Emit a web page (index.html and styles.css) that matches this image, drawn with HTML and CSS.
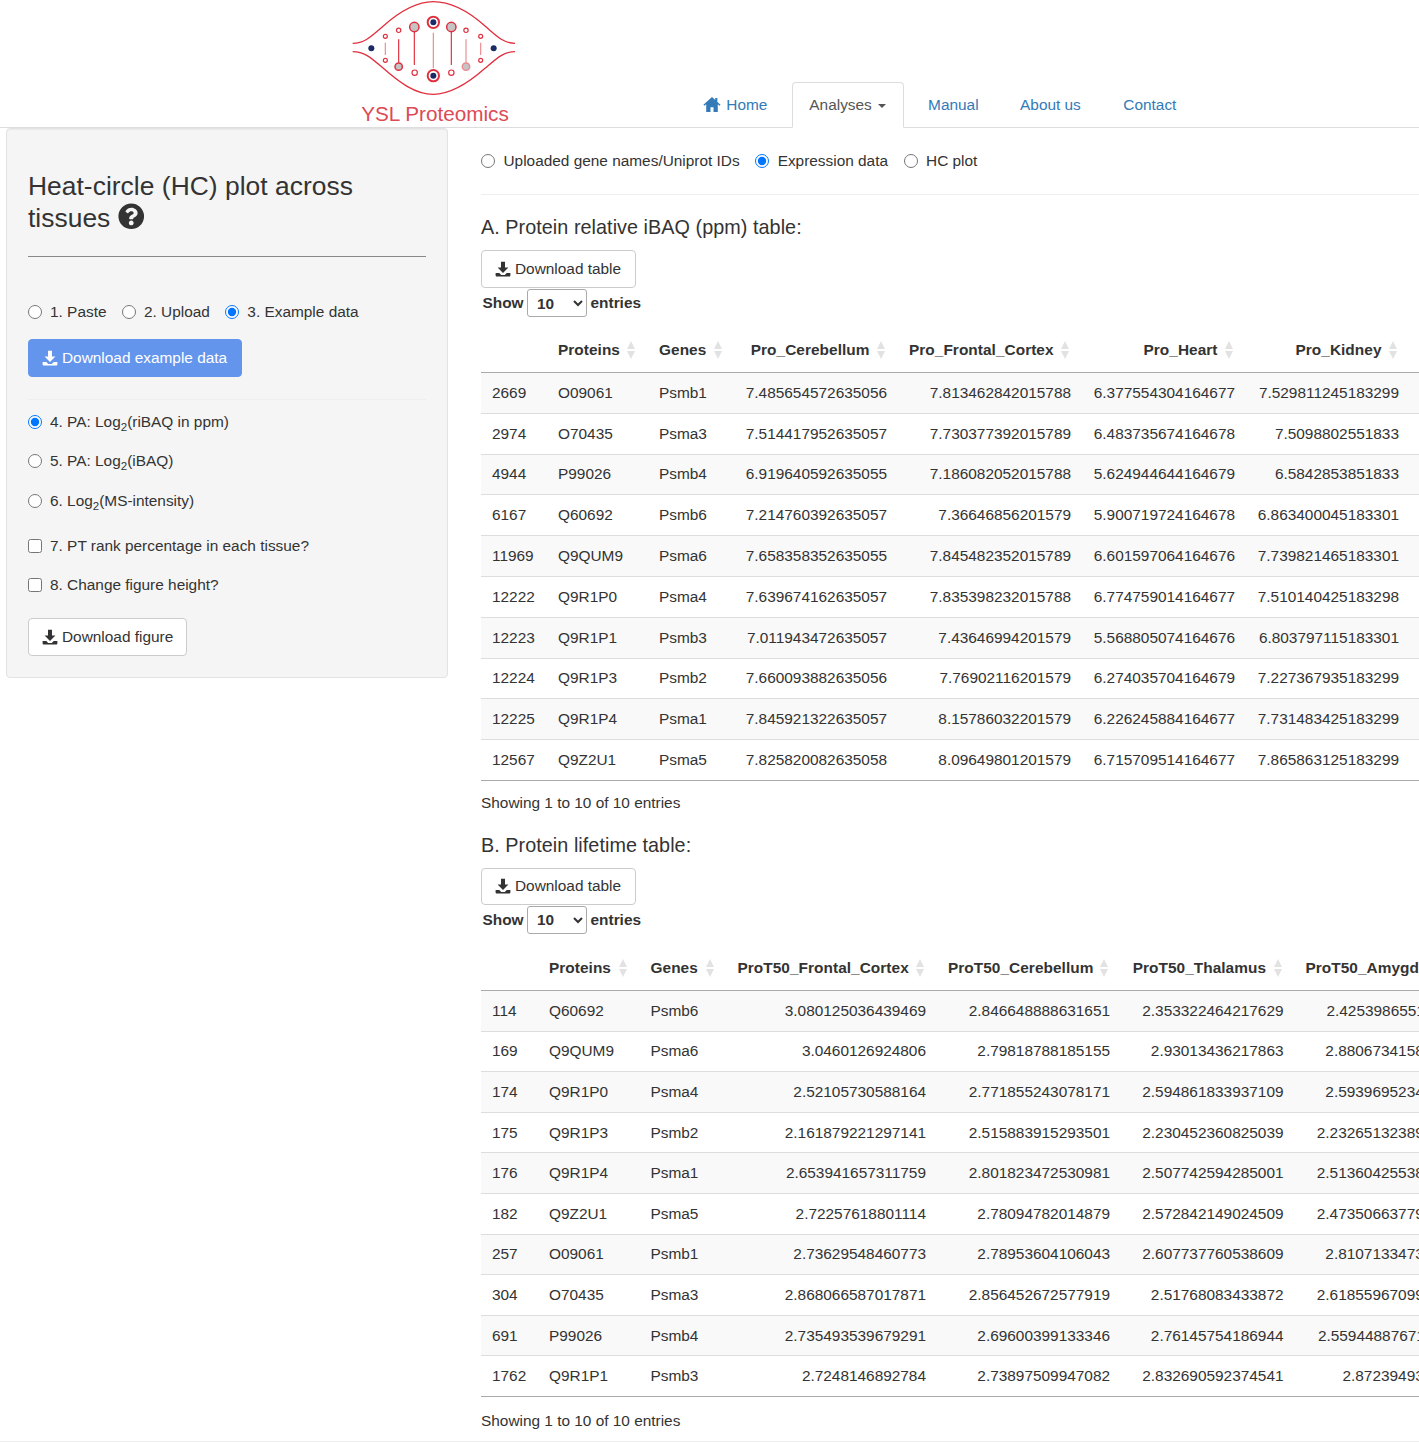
FILE: index.html
```html
<!DOCTYPE html>
<html lang="en">
<head>
<meta charset="utf-8">
<title>YSL Proteomics</title>
<link rel="stylesheet" href="styles.css">
</head>
<body>
<svg class="sprites" width="0" height="0" aria-hidden="true">
  <symbol id="dl" viewBox="0 0 16 16"><path d="M6 .8h4v5.700h3.400L8 11.900 2.600 6.500H6zM.6 12h3.700l1.900 1.900h3.600l1.900-1.900h3.700v2.200c0 .8-.5 1.300-1.300 1.300H1.900c-.8 0-1.300-.5-1.300-1.300z"/></symbol>
</svg>
<header class="navbar">
  <div class="brand">
    <svg class="logo" viewBox="0 0 570 330" aria-hidden="true">
      <g fill="none" stroke="#e0303f" stroke-width="4">
        <path d="M38 130C75 130 95 108 130 78C175 38 225 5 280 5C335 5 390 38 435 78C470 108 490 130 525 130"/>
        <path d="M38 155C75 155 95 175 130 205C175 245 225 283 280 283C335 283 390 245 435 205C470 175 490 155 525 155"/>
        <path d="M176 118V188M223 95V195M334 95V195" stroke-width="3.500"/>
        <path d="M136 128V165M280 98V205M378 118V188M422 128V165" stroke="#ea8c92" stroke-width="3.500"/>
        <g stroke-width="3.500">
          <circle cx="136" cy="109" r="6"/><circle cx="136" cy="181" r="6"/>
          <circle cx="176" cy="91" r="6.500"/><circle cx="224" cy="218" r="8"/>
          <circle cx="334" cy="218" r="8"/><circle cx="378" cy="91" r="6.500"/>
          <circle cx="422" cy="109" r="6"/><circle cx="422" cy="181" r="6"/>
        </g>
        <g fill="#c4c4c4" stroke-width="4.500">
          <circle cx="176" cy="200" r="11"/>
          <circle cx="223" cy="81" r="14"/><circle cx="334" cy="81" r="14"/>
          <circle cx="378" cy="200" r="11" stroke="#ea8c92"/>
        </g>
        <circle cx="280" cy="67" r="17" stroke-width="6"/>
        <circle cx="280" cy="227" r="17" stroke-width="6"/>
      </g>
      <g fill="#1c2a66">
        <circle cx="94" cy="145" r="9"/><circle cx="461" cy="145" r="9"/>
        <circle cx="280" cy="67" r="9"/><circle cx="280" cy="227" r="9"/>
      </g>
    </svg>
    <span class="brand-name">YSL Proteomics</span>
  </div>
  <nav class="tabs">
    <a class="tab"><svg class="home-icon" viewBox="0 0 16 14" aria-hidden="true"><path d="M8 0 0 7.200l.9 1L2.600 6.800V14h4V9.500h2.800V14h4V6.800l1.700 1.400.9-1L13 4.600V1h-2v1.800z"/></svg> Home</a>
    <a class="tab active">Analyses <span class="caret"></span></a>
    <a class="tab">Manual</a>
    <a class="tab tab-about">About us</a>
    <a class="tab tab-contact">Contact</a>
  </nav>
</header>

<div class="page">
  <aside class="well">
    <h3 class="well-title">Heat-circle (HC) plot across tissues <svg class="help" viewBox="0 0 512 512" aria-hidden="true"><path d="M504 256c0 136.997-111.043 248-248 248S8 392.997 8 256C8 119.083 119.043 8 256 8s248 111.083 248 248zM262.655 90c-54.497 0-89.255 22.957-116.549 63.758-3.536 5.286-2.353 12.415 2.715 16.258l34.699 26.310c5.205 3.947 12.621 3.008 16.665-2.122 17.864-22.658 30.113-35.797 57.303-35.797 20.429 0 45.698 13.148 45.698 32.958 0 14.976-12.363 22.667-32.534 33.976C247.128 238.528 216 254.941 216 296v4c0 6.627 5.373 12 12 12h56c6.627 0 12-5.373 12-12v-1.333c0-28.462 83.186-29.647 83.186-106.667 0-58.002-60.165-102-116.531-102zM256 338c-25.365 0-46 20.635-46 46 0 25.364 20.635 46 46 46s46-20.636 46-46c0-25.365-20.635-46-46-46z"/></svg></h3>
    <hr class="rule-dark">
    <div class="inline-options well-source">
      <label class="opt"><input type="radio" name="src"><span>1. Paste</span></label>
      <label class="opt"><input type="radio" name="src"><span>2. Upload</span></label>
      <label class="opt"><input type="radio" name="src" checked><span>3. Example data</span></label>
    </div>
    <a class="btn btn-blue"><svg class="dl-icon" aria-hidden="true"><use href="#dl"/></svg> Download example data</a>
    <hr class="rule-light">
    <div class="stack">
      <label class="opt row-4"><input type="radio" name="q" checked><span>4. PA: Log<sub>2</sub>(riBAQ in ppm)</span></label>
      <label class="opt row-5"><input type="radio" name="q"><span>5. PA: Log<sub>2</sub>(iBAQ)</span></label>
      <label class="opt row-6"><input type="radio" name="q"><span>6. Log<sub>2</sub>(MS-intensity)</span></label>
      <label class="opt row-7"><input type="checkbox"><span>7. PT rank percentage in each tissue?</span></label>
      <label class="opt row-8"><input type="checkbox"><span>8. Change figure height?</span></label>
    </div>
    <a class="btn btn-fig"><svg class="dl-icon" aria-hidden="true"><use href="#dl"/></svg> Download figure</a>
  </aside>

  <main class="main">
    <div class="inline-options top-options">
      <label class="opt"><input type="radio" name="view"><span>Uploaded gene names/Uniprot IDs</span></label>
      <label class="opt"><input type="radio" name="view" checked><span>Expression data</span></label>
      <label class="opt"><input type="radio" name="view"><span>HC plot</span></label>
    </div>
    <hr class="rule-top">

    <h4 class="section-title section-a">A. Protein relative iBAQ (ppm) table:</h4>
    <a class="btn btn-table"><svg class="dl-icon" aria-hidden="true"><use href="#dl"/></svg> Download table</a>
    <div class="length"><span>Show</span><select class="length-select"><option>10</option></select><span>entries</span></div>
    <div class="table-clip">
      <table class="data table-a">
        <colgroup><col class="a1"><col class="a2"><col class="a3"><col class="a4"><col class="a5"><col class="a6"><col class="a7"><col class="a8"></colgroup>
        <thead><tr><th></th><th class="l">Proteins<i class="sort"></i></th><th class="l">Genes<i class="sort"></i></th><th>Pro_Cerebellum<i class="sort"></i></th><th>Pro_Frontal_Cortex<i class="sort"></i></th><th>Pro_Heart<i class="sort"></i></th><th>Pro_Kidney<i class="sort"></i></th><th></th></tr></thead>
        <tbody>
          <tr><td class="l">2669</td><td class="l">O09061</td><td class="l">Psmb1</td><td>7.485654572635056</td><td>7.813462842015788</td><td>6.377554304164677</td><td>7.529811245183299</td><td></td></tr>
          <tr><td class="l">2974</td><td class="l">O70435</td><td class="l">Psma3</td><td>7.514417952635057</td><td>7.730377392015789</td><td>6.483735674164678</td><td>7.5098802551833</td><td></td></tr>
          <tr><td class="l">4944</td><td class="l">P99026</td><td class="l">Psmb4</td><td>6.919640592635055</td><td>7.186082052015788</td><td>5.624944644164679</td><td>6.5842853851833</td><td></td></tr>
          <tr><td class="l">6167</td><td class="l">Q60692</td><td class="l">Psmb6</td><td>7.214760392635057</td><td>7.36646856201579</td><td>5.900719724164678</td><td>6.863400045183301</td><td></td></tr>
          <tr><td class="l">11969</td><td class="l">Q9QUM9</td><td class="l">Psma6</td><td>7.658358352635055</td><td>7.845482352015789</td><td>6.601597064164676</td><td>7.739821465183301</td><td></td></tr>
          <tr><td class="l">12222</td><td class="l">Q9R1P0</td><td class="l">Psma4</td><td>7.639674162635057</td><td>7.835398232015788</td><td>6.774759014164677</td><td>7.510140425183298</td><td></td></tr>
          <tr><td class="l">12223</td><td class="l">Q9R1P1</td><td class="l">Psmb3</td><td>7.011943472635057</td><td>7.43646994201579</td><td>5.568805074164676</td><td>6.803797115183301</td><td></td></tr>
          <tr><td class="l">12224</td><td class="l">Q9R1P3</td><td class="l">Psmb2</td><td>7.660093882635056</td><td>7.76902116201579</td><td>6.274035704164679</td><td>7.227367935183299</td><td></td></tr>
          <tr><td class="l">12225</td><td class="l">Q9R1P4</td><td class="l">Psma1</td><td>7.845921322635057</td><td>8.15786032201579</td><td>6.226245884164677</td><td>7.731483425183299</td><td></td></tr>
          <tr><td class="l">12567</td><td class="l">Q9Z2U1</td><td class="l">Psma5</td><td>7.825820082635058</td><td>8.09649801201579</td><td>6.715709514164677</td><td>7.865863125183299</td><td></td></tr>
        </tbody>
      </table>
    </div>
    <p class="info">Showing 1 to 10 of 10 entries</p>

    <h4 class="section-title section-b">B. Protein lifetime table:</h4>
    <a class="btn btn-table btn-table-b"><svg class="dl-icon" aria-hidden="true"><use href="#dl"/></svg> Download table</a>
    <div class="length"><span>Show</span><select class="length-select"><option>10</option></select><span>entries</span></div>
    <div class="table-clip clip-b">
      <table class="data table-b">
        <colgroup><col class="b1"><col class="b2"><col class="b3"><col class="b4"><col class="b5"><col class="b6"><col class="b7"></colgroup>
        <thead><tr><th></th><th class="l">Proteins<i class="sort"></i></th><th class="l">Genes<i class="sort"></i></th><th>ProT50_Frontal_Cortex<i class="sort"></i></th><th>ProT50_Cerebellum<i class="sort"></i></th><th>ProT50_Thalamus<i class="sort"></i></th><th>ProT50_Amygdala<i class="sort"></i></th></tr></thead>
        <tbody>
          <tr><td class="l">114</td><td class="l">Q60692</td><td class="l">Psmb6</td><td>3.080125036439469</td><td>2.846648888631651</td><td>2.353322464217629</td><td>2.42539865511234</td></tr>
          <tr><td class="l">169</td><td class="l">Q9QUM9</td><td class="l">Psma6</td><td>3.0460126924806</td><td>2.79818788185155</td><td>2.93013436217863</td><td>2.88067341581234</td></tr>
          <tr><td class="l">174</td><td class="l">Q9R1P0</td><td class="l">Psma4</td><td>2.52105730588164</td><td>2.771855243078171</td><td>2.594861833937109</td><td>2.59396952341234</td></tr>
          <tr><td class="l">175</td><td class="l">Q9R1P3</td><td class="l">Psmb2</td><td>2.161879221297141</td><td>2.515883915293501</td><td>2.230452360825039</td><td>2.232651323891234</td></tr>
          <tr><td class="l">176</td><td class="l">Q9R1P4</td><td class="l">Psma1</td><td>2.653941657311759</td><td>2.801823472530981</td><td>2.507742594285001</td><td>2.513604255381234</td></tr>
          <tr><td class="l">182</td><td class="l">Q9Z2U1</td><td class="l">Psma5</td><td>2.72257618801114</td><td>2.78094782014879</td><td>2.572842149024509</td><td>2.473506637791234</td></tr>
          <tr><td class="l">257</td><td class="l">O09061</td><td class="l">Psmb1</td><td>2.73629548460773</td><td>2.78953604106043</td><td>2.607737760538609</td><td>2.81071334731234</td></tr>
          <tr><td class="l">304</td><td class="l">O70435</td><td class="l">Psma3</td><td>2.868066587017871</td><td>2.856452672577919</td><td>2.51768083433872</td><td>2.618559670991234</td></tr>
          <tr><td class="l">691</td><td class="l">P99026</td><td class="l">Psmb4</td><td>2.735493539679291</td><td>2.69600399133346</td><td>2.76145754186944</td><td>2.559448876711234</td></tr>
          <tr><td class="l">1762</td><td class="l">Q9R1P1</td><td class="l">Psmb3</td><td>2.7248146892784</td><td>2.73897509947082</td><td>2.832690592374541</td><td>2.872394931234</td></tr>
        </tbody>
      </table>
    </div>
    <p class="info info-b">Showing 1 to 10 of 10 entries</p>
  </main>
</div>
<footer class="page-foot"></footer>
</body>
</html>
```

FILE: styles.css
```css
* { box-sizing: border-box; }
html, body { margin: 0; padding: 0; height: 1442px; overflow: hidden; background: #fff; }
body {
  font-family: "Liberation Sans", Arial, sans-serif;
  font-size: 15.4px;
  line-height: 22px;
  color: #333;
}
.sprites { position: absolute; }

/* navbar */
.navbar {
  display: flex;
  align-items: flex-end;
  height: 128px;
  padding-left: 340px;
  border-bottom: 1px solid #ddd;
}
.brand { width: 190px; height: 127px; display: flex; flex-direction: column; align-items: center; margin-right: 157.5px; }
.logo { width: 190px; height: 110px; display: block; flex: none; }
.brand-name { color: #dc4a55; font-size: 20.7px; line-height: 24px; margin-top: -8px; white-space: nowrap; }
.tabs { display: flex; gap: 8px; margin-bottom: -1px; }
.tab {
  display: block;
  height: 46px;
  padding: 11px 16.5px;
  color: #337ab7;
  border: 1px solid transparent;
  border-width: 1px 0 0;
  white-space: nowrap;
}
.tab.active {
  color: #555;
  background: #fff;
  border: 1px solid #ddd;
  border-bottom-color: #fff;
  border-radius: 4px 4px 0 0;
}
.tab-about { margin-left: .5px; }
.tab-contact { margin-left: 1.5px; }
.home-icon { width: 18px; height: 15px; fill: #337ab7; vertical-align: -2px; margin-left: -1px; margin-right: 1px; }
.caret {
  display: inline-block;
  width: 0; height: 0;
  margin-left: 2px;
  vertical-align: middle;
  border-top: 4px solid #555;
  border-left: 4px solid transparent;
  border-right: 4px solid transparent;
}

/* layout */
.page { display: flex; align-items: flex-start; height: 1313px; padding-left: 6px; gap: 33px; }
.page-foot { border-top: 1px solid #eee; }
.well {
  width: 442px;
  flex: none;
  height: 550px;
  padding: 21px;
  background: #f5f5f5;
  border: 1px solid #e3e3e3;
  border-radius: 4px;
  box-shadow: inset 0 1px 1px rgba(0,0,0,.05);
}
.main { flex: 1; min-width: 0; }

.well-title { margin: 20px 0 0; font-size: 26.4px; line-height: 32px; font-weight: 400; letter-spacing: .03px; }
.help { width: 26.5px; height: 26.5px; fill: #333; vertical-align: -2.5px; margin-left: 0; }
.rule-dark { margin: 22px 0 0; border: 0; border-top: 1px solid #888; }
.rule-light { margin: 22px 0 0; border: 0; border-top: 1px solid #eee; }
.rule-top { margin: 22px 0 0; border: 0; border-top: 1px solid #eee; }

.inline-options { display: flex; }
.well-source { margin-top: 44px; gap: 15.5px; }
.top-options { margin-top: 22px; gap: 15.5px; }
.top-options .opt input { margin-right: 8.5px; }
.opt { display: flex; align-items: center; height: 22px; white-space: nowrap; }
.opt input { width: 14px; height: 14px; margin: 0 8px 0 0; flex: none; accent-color: #0075ff; }
.opt sub { font-size: 11.5px; line-height: 0; position: relative; bottom: -4px; vertical-align: baseline; }
.stack { display: flex; flex-direction: column; margin-top: 11px; }
.row-5 { margin-top: 17px; }
.row-6 { margin-top: 18px; }
.row-7 { margin-top: 23px; }
.row-8 { margin-top: 17px; }

/* buttons */
.btn {
  display: inline-flex;
  align-items: center;
  height: 38px;
  padding: 0 13px;
  border: 1px solid #ccc;
  border-radius: 4px;
  background: #fff;
  color: #333;
  white-space: nowrap;
}
.btn-blue { margin-top: 16px; width: 214px; background: #6495ed; border-color: #6495ed; color: #fff; }
.btn-fig { margin-top: 22px; width: 159px; }
.btn-table { width: 155px; }
.btn-table-b { height: 37px; }
.dl-icon { width: 16px; height: 16px; fill: currentColor; margin-right: 4px; flex: none; }

/* tables */
.section-title { margin: 21px 0 12px; font-size: 19.8px; line-height: 22px; font-weight: 400; letter-spacing: .05px; }
.section-a { margin-top: 21px; }
.section-b { margin-top: 20px; }
.length { display: flex; align-items: center; gap: 3.5px; height: 28px; margin-top: 1px; padding-left: 1.5px; font-weight: 700; }
.length-select {
  width: 60px; height: 28px;
  padding: 0 5px;
  font: 700 15.4px "Liberation Sans", Arial, sans-serif;
  color: #333;
  background: #fff;
  border: 1px solid #aaa;
  border-radius: 3px;
}
.table-clip { overflow: hidden; margin-top: 13px; }
.clip-b { margin-top: 14px; }
.data { table-layout: fixed; border-collapse: separate; border-spacing: 0; }
.table-a { width: 1029px; }
.table-b { width: 988px; }
.a1 { width: 66px; } .a2 { width: 101px; } .a3 { width: 86.5px; } .a4 { width: 163.5px; }
.a5 { width: 184px; } .a6 { width: 164px; } .a7 { width: 164px; } .a8 { width: 100px; }
.b1 { width: 57px; } .b2 { width: 101.5px; } .b3 { width: 87px; } .b4 { width: 210.5px; }
.b5 { width: 184px; } .b6 { width: 173.5px; } .b7 { width: 174.5px; }
.data th, .data td { white-space: nowrap; text-align: right; overflow: hidden; }
.data th {
  position: relative;
  height: 43px;
  padding: 8.8px 28.5px 10.8px 11px;
  font-weight: 700;
  border-bottom: 1.5px solid #aaa;
  letter-spacing: .05px;
}
.data td {
  height: 40.8px;
  padding: 8.8px 11px;
  border-bottom: 1px solid #ddd;
}
.table-b td { height: 40.55px; }
.data .l { text-align: left; }
.data tbody tr:nth-child(odd) td { background: #f9f9f9; }
.data tbody tr:last-child td { border-bottom-color: #aaa; }
.sort {
  position: absolute;
  right: 13px;
  top: 11px;
  width: 8px;
  height: 18px;
}
.sort::before, .sort::after {
  content: "";
  position: absolute;
  left: 0;
  border-left: 4px solid transparent;
  border-right: 4px solid transparent;
}
.sort::before { top: 0; border-bottom: 8px solid #e2e2e2; }
.sort::after { bottom: 0; border-top: 8px solid #e2e2e2; }
.info { margin: 11px 0 0; }
.info-b { margin-top: 13px; }
```
